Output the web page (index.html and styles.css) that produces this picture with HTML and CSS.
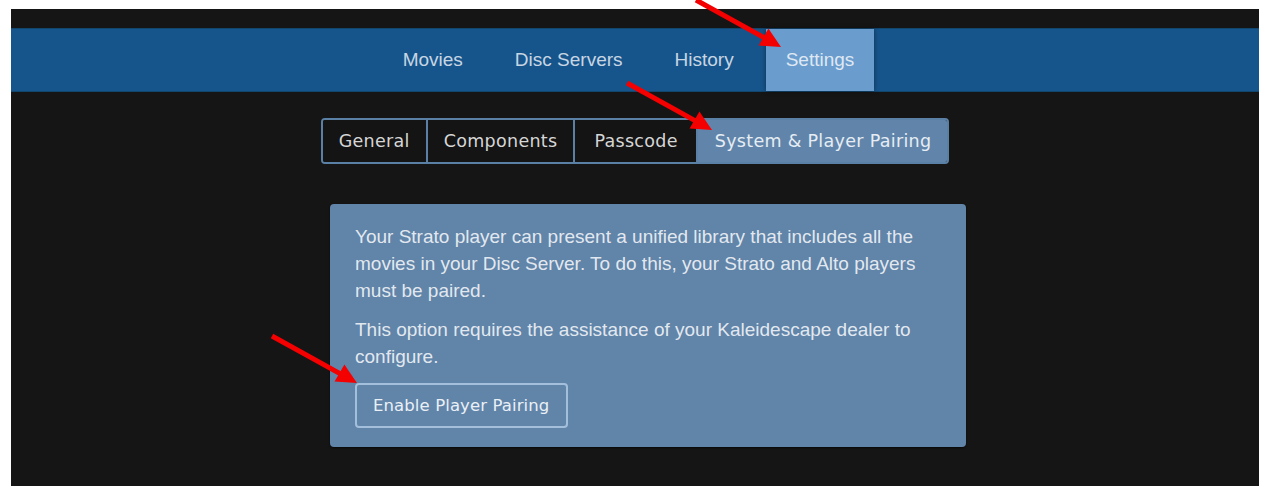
FILE: index.html
```html
<!DOCTYPE html>
<html>
    <head>
        <title>Settings - System &amp; Player Pairing</title>
        <link rel="stylesheet" href="styles.css">
    </head>
    <body>
        <div class="screen">
            <nav class="topnav">
                <a class="nav-item">Movies</a>
                <a class="nav-item">Disc Servers</a>
                <a class="nav-item">History</a>
                <a class="nav-item active">Settings</a>
            </nav>

            <div class="content">
                <div class="tabs">
                    <div class="tab">General</div>
                    <div class="tab">Components</div>
                    <div class="tab passcode">Passcode</div>
                    <div class="tab active">System &amp; Player Pairing</div>
                </div>

                <div class="panel">
                    <p>Your Strato player can present a unified library that includes all the movies in your Disc Server. To do this, your Strato and Alto players must be paired.</p>
                    <p>This option requires the assistance of your Kaleidescape dealer to configure.</p>
                    <button class="pair-btn">Enable Player Pairing</button>
                </div>
            </div>
        </div>

        <!-- red annotation arrows -->
        <svg class="arrows" width="1269" height="496" viewBox="0 0 1269 496">
            <defs>
                <g id="arrow">
                    <line x1="0" y1="0" x2="68" y2="37.6" stroke="#f40000" stroke-width="5"/>
                    <polygon points="85,47 62.6,45.6 72.4,28.6" fill="#f40000"/>
                </g>
            </defs>
            <use href="#arrow" x="696" y="0"/>
            <use href="#arrow" x="627" y="83"/>
            <use href="#arrow" x="272" y="336"/>
        </svg>
    </body>
</html>
```

FILE: styles.css
```css
body{
    margin: 0;
    background: #fff;
    font-family: "Liberation Sans", Arial, sans-serif;
    position: relative;
}

.screen{
    margin: 9px 10px 0 11px;
    height: 477px;
    background: #151515;
    padding-top: 19px;
    box-sizing: border-box;
}

.topnav{
    height: 64px;
    display: flex;
    justify-content: center;
    gap: 12px;
    padding-right: 13px;
    background: #16558b;
    border-top: 1px solid #11466f;
    border-bottom: 1px solid #11466f;
    box-sizing: border-box;
}
.nav-item{
    padding: 0 20px;
    line-height: 62px;
    font-size: 19px;
    color: #c8d5e3;
}
.nav-item.active{
    background: #6a9ccd;
    color: #dfe8f2;
    box-shadow: 0 0 5px rgba(0, 0, 0, 0.45);
}

.content{
    display: flex;
    flex-direction: column;
    align-items: center;
    padding-top: 26px;
}

.tabs{
    display: flex;
    height: 46px;
    border: 2px solid #5b80a6;
    border-radius: 4px;
    box-sizing: border-box;
    overflow: hidden;
    font-family: "DejaVu Sans", sans-serif;
    font-size: 17.5px;
    letter-spacing: 0.3px;
}
.tab{
    padding: 0 16px;
    line-height: 42px;
    color: #d6d6d6;
    background: #141414;
    border-right: 2px solid #5b80a6;
}
.tab.passcode{
    padding: 0 18px 0 19px;
}
.tab.active{
    border-right: none;
    padding: 0 16px 0 17px;
    background: #6185aa;
    color: #e6edf4;
}

.panel{
    width: 636px;
    margin: 40px 0 0 26px;
    padding: 19px 25px;
    box-sizing: border-box;
    background: #6184a9;
    border-radius: 4px;
    box-shadow: 0 1px 2px rgba(0, 0, 0, 0.6);
    color: rgba(255, 255, 255, 0.84);
    font-size: 19px;
    line-height: 27px;
}
.panel p{
    margin: 0 0 12px;
}
.panel p:last-of-type{
    margin-bottom: 13px;
}

.pair-btn{
    display: block;
    height: 45px;
    padding: 0 17px 0 16px;
    background: transparent;
    border: 2px solid #a3bfdc;
    border-radius: 4px;
    font-family: "DejaVu Sans", sans-serif;
    font-size: 16.5px;
    letter-spacing: 0.1px;
    color: #eaf0f6;
    cursor: pointer;
}

.arrows{
    position: absolute;
    top: 0;
    left: 0;
    pointer-events: none;
}
```
